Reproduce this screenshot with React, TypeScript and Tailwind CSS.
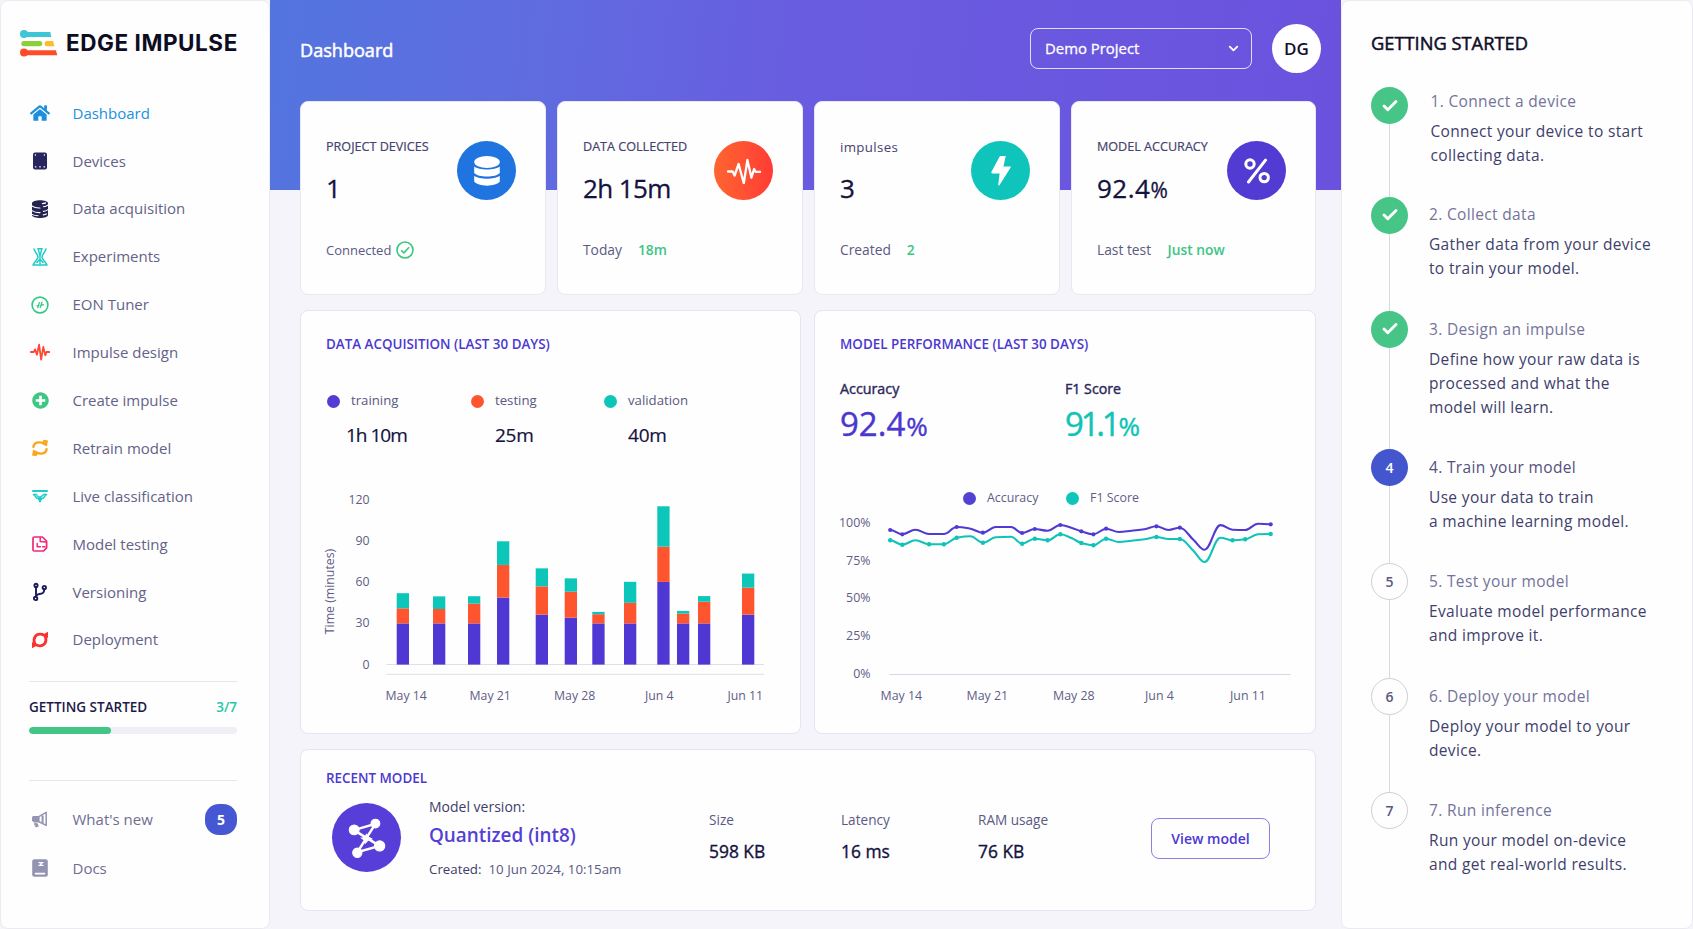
import type { ReactNode } from "react";
import { FaHome, FaPlusCircle } from "react-icons/fa";
import { Check, ChevronDown } from "lucide-react";
import { clsx } from "clsx";

interface INavItem {
  label: string;
  icon: ReactNode;
  active?: boolean;
}

interface IStep {
  title: string;
  lines: string[];
  state: "done" | "current" | "todo";
  rowClass: string;
  textClass: string;
}

const WAVE = "M0.8 10h3l1.3-2.6 1.8 5.4 2.2-10.2 2 15 2.2-12.6 2 8.4 1.2-3.4h2.8";

function Glyph({ children }: { children: ReactNode }) {
  return (
    <svg viewBox="0 0 20 20" className="h-5 w-5" fill="none" strokeLinecap="round" strokeLinejoin="round">
      {children}
    </svg>
  );
}

function Logo() {
  return (
    <div className="flex h-7 items-center gap-[8px]">
      <svg viewBox="0 0 38 28" className="h-7 w-[38px] shrink-0">
        <path d="M4 3h26.3l1 5H4z" fill="#3fc6d6" />
        <circle cx="4" cy="5" r="4" fill="#3fc6d6" />
        <rect x="1.3" y="12" width="21" height="5.2" rx="2.6" fill="#8bd03c" />
        <path d="M27.2 12h5.8l1.4 5.2h-7.2a2.6 2.6 0 0 1 0-5.2z" fill="#fdbb2d" />
        <path d="M4 21.2h31.8l1.6 5H4z" fill="#ff4b28" />
        <circle cx="4" cy="23.6" r="4" fill="#ff4b28" />
      </svg>
      <span className="font-[Inter,sans-serif] text-[22.5px] leading-7 font-bold tracking-[0.55px] whitespace-nowrap text-[#0c0c22]">
        EDGE IMPULSE
      </span>
    </div>
  );
}

const navItems: INavItem[] = [
  { label: "Dashboard", icon: <FaHome className="h-5 w-5 text-[#1e8fdd]" />, active: true },
  {
    label: "Devices",
    icon: (
      <Glyph>
        <rect x="3" y="1.5" width="14" height="17" rx="2" fill="#262560" />
        <path d="M5.3 4h.2M14.3 4h.2M5.3 15.8h.6M9.7 15.8h.6M14 15.8h.6" stroke="#fff" strokeWidth="1.3" />
      </Glyph>
    ),
  },
  {
    label: "Data acquisition",
    icon: (
      <Glyph>
        <path d="M2 4.2C2 .2 18 .2 18 4.2V16c0 4-16 4-16 0z" fill="#25234f" />
        <path
          d="M2 7c2.5 1.8 5 2.2 8 2M2 11.6c2.5 1.8 5 2.2 8 2M2 15.4c2 1.2 4 1.4 6 1.4M18 6c-1.4 1-3 1.6-4.6 1.8M18 10.6c-1.4 1-3 1.6-4.6 1.8"
          stroke="#fff"
          strokeWidth="1.1"
        />
        <path d="M12.5 4.6l3-.6M13.4 15.8c1.2-.2 2-.4 3-.8" stroke="#fff" strokeWidth="1.3" />
      </Glyph>
    ),
  },
  {
    label: "Experiments",
    icon: (
      <Glyph>
        <g stroke="#1fcac6" strokeWidth="1.5">
          <path d="M4 1.9C5 5.8 8 7.6 8 10S4.4 14.6 3 18h14c-1.4-3.4-5-5.6-5-8s3-4.2 4-8.1" />
          <path d="M7.8 1.8h4.4M8.4 2.6L10 9l1.6-6.4M10 8.5V17M6.8 15.6l3.2-3.4 3.2 3.4" strokeWidth="1.4" />
        </g>
      </Glyph>
    ),
  },
  {
    label: "EON Tuner",
    icon: (
      <Glyph>
        <circle cx="10" cy="10" r="7.9" stroke="#35c884" strokeWidth="1.6" />
        <path d="M9.3 7.6l-1.4 5M11.9 7.2l-1.6 5.2M7 10.8l2-.4M11 10.4l2.4-.8" stroke="#35c884" strokeWidth="1.3" />
      </Glyph>
    ),
  },
  {
    label: "Impulse design",
    icon: (
      <Glyph>
        <path d={WAVE} stroke="#fb4a34" strokeWidth="1.8" />
      </Glyph>
    ),
  },
  { label: "Create impulse", icon: <FaPlusCircle className="h-[17px] w-[17px] text-[#40c683]" /> },
  {
    label: "Retrain model",
    icon: (
      <Glyph>
        <g stroke="#fca51e" strokeWidth="2.4">
          <path d="M3.4 8.8C4 5.6 6.4 4.3 9.4 4.4c1.8.1 3.2.4 4.4 1" />
          <path d="M16.6 11.2c-.6 3.2-3 4.5-6 4.4-1.8-.1-3.2-.4-4.4-1" />
        </g>
        <path d="M13.4 1.8l4.6.8-1.2 5.8-4.4-2.2zM6.6 18.2L2 17.4l1.2-5.8 4.4 2.2z" fill="#fca51e" />
      </Glyph>
    ),
  },
  {
    label: "Live classification",
    icon: (
      <Glyph>
        <g stroke="#22cbc9">
          <path d="M3 5h14" strokeWidth="2.2" />
          <path
            d="M3.4 8.4h3.2M13.4 8.4h3.2M3.8 8.6l3 3.6h6.4l3-3.6M7.2 9.8l2 1M12.8 9.4l-2.2 1.4M10 12v3.6"
            strokeWidth="1.5"
          />
        </g>
        <path d="M7.6 13h4.8L10 16.8z" fill="#22cbc9" />
      </Glyph>
    ),
  },
  {
    label: "Model testing",
    icon: (
      <Glyph>
        <g stroke="#f02878" strokeWidth="1.7">
          <path d="M4.2 3h8.2l4.2 4v6.8l-3 3.2H4.2A1.2 1.2 0 0 1 3 15.8V4.2A1.2 1.2 0 0 1 4.2 3z" />
          <path d="M10.2 3.6V7.6l5.8.4M7.2 9.6v3.2h3.2M12.6 12.8h2.4" strokeWidth="1.5" />
        </g>
      </Glyph>
    ),
  },
  {
    label: "Versioning",
    icon: (
      <Glyph>
        <g stroke="#1d1b5a" strokeWidth="1.9">
          <circle cx="6" cy="3.4" r="1.6" />
          <circle cx="14.3" cy="5.6" r="1.7" />
          <circle cx="5.6" cy="16.4" r="1.7" />
          <path d="M6 5v9.6M14.3 7.3c0 4-2.3 4.3-5 4.7-2 .3-2.8 1-3.3 2.4" />
        </g>
      </Glyph>
    ),
  },
  {
    label: "Deployment",
    icon: (
      <Glyph>
        <g stroke="#fa3230" strokeWidth="2.8">
          <path d="M4.6 13C2.8 8.6 5.4 4.2 10 4.2c1.6 0 3 .4 4.2 1.2" />
          <path d="M15.4 7c1.8 4.4-.8 8.8-5.4 8.8-1.6 0-3-.4-4.2-1.2" />
        </g>
        <path d="M12.4 4.8L18 1.8V8zM7.6 15.2L2 18.2V12z" fill="#fa3230" />
      </Glyph>
    ),
  },
];

function Sidebar() {
  return (
    <aside className="flex w-[270px] shrink-0 flex-col rounded-lg border border-[#ebeaf1] bg-[#fefefe] pr-[32px] pl-[28px]">
      <div className="mt-[28px] -ml-[9px]">
        <Logo />
      </div>
      <nav className="mt-[32px] flex flex-col">
        {navItems.map((item) => (
          <a key={item.label} className="flex h-[47.9px] items-center">
            <span className="flex w-[22px] justify-center">{item.icon}</span>
            <span
              className={clsx(
                "ml-[21.5px] text-[15px] whitespace-nowrap",
                item.active ? "text-[#2092df]" : "text-[#646288]",
              )}
            >
              {item.label}
            </span>
          </a>
        ))}
      </nav>
      <section className="mt-[17.4px] h-[100px] border-y border-[#e6e5ec] pt-[14px]">
        <div className="flex justify-between text-[13.5px] leading-[22px] font-semibold">
          <h2 className="text-[#1c1a48]">GETTING STARTED</h2>
          <span className="text-[#1fc8a8]">3/7</span>
        </div>
        <div className="mt-[8.5px] h-[7px] overflow-hidden rounded-full bg-[#f0eff5]">
          <div className="h-full w-[82px] rounded-full bg-[#43c585]" />
        </div>
      </section>
      <a className="mt-[14px] flex h-12 items-center">
        <span className="flex w-[22px] justify-center">
          <Glyph>
            <path d="M2.8 7h6.8v6.4H3.8L2 11.6V8.8z" fill="#9493b1" />
            <path d="M9.6 7.2l6.6-3.8v13L9.6 13" stroke="#9493b1" strokeWidth="1.5" />
            <path d="M12.6 7.2v6" stroke="#9493b1" strokeWidth="2" />
            <path d="M4.8 14.6l2.6.2.8 2.4-2 .6z" fill="#9493b1" stroke="#9493b1" />
          </Glyph>
        </span>
        <span className="ml-[21.5px] text-[15px] text-[#6f6d92]">What's new</span>
        <span className="ml-auto flex h-[31px] w-[32px] items-center justify-center rounded-[14px] bg-[#4657d3] text-[14px] font-bold text-white">
          5
        </span>
      </a>
      <a className="mt-[1px] flex h-12 items-center">
        <span className="flex w-[22px] justify-center">
          <Glyph>
            <rect x="2.2" y="1.2" width="15.6" height="17.6" rx="2" fill="#9493b1" />
            <path d="M9 4.6h4M9 7.4h4M11.8 4.8l-1.6 2.4" stroke="#fff" strokeWidth="1.3" />
            <path d="M5.6 15.6h8.8" stroke="#fff" strokeWidth="1.8" />
          </Glyph>
        </span>
        <span className="ml-[21.5px] text-[15px] text-[#6f6d92]">Docs</span>
      </a>
    </aside>
  );
}

function StatCard({
  label,
  labelClass = "text-[12.6px] [-webkit-text-stroke:0.2px]",
  value,
  valueClass,
  unit,
  note,
  noteClass,
  extra,
  icon,
  iconClass,
}: {
  label: string;
  labelClass?: string;
  value: string;
  valueClass?: string;
  unit?: string;
  note: string;
  noteClass?: string;
  extra: ReactNode;
  icon: ReactNode;
  iconClass: string;
}) {
  return (
    <article className="flex h-[194px] justify-between rounded-lg border border-[#e9e8f1] bg-[#fefefe] pr-[29px] pl-[25px]">
      <div className="flex flex-col">
        <h3 className={clsx("mt-[34.5px] h-[19.5px] leading-[20px] whitespace-nowrap text-[#45436f]", labelClass)}>
          {label}
        </h3>
        <p
          className={clsx(
            "mt-[14px] h-[36px] text-[26px] leading-[36px] whitespace-nowrap text-[#14123f] [-webkit-text-stroke:0.3px]",
            valueClass,
          )}
        >
          {value}
          {unit && <span className="text-[21px]">{unit}</span>}
        </p>
        <p className="mt-[34px] flex h-[20px] items-center text-[13.8px] leading-[20px] whitespace-nowrap text-[#5b5983]">
          <span className={noteClass}>{note}</span>
          {extra}
        </p>
      </div>
      <div className={clsx("mt-[39px] flex h-[59px] w-[59px] shrink-0 items-center justify-center rounded-full", iconClass)}>
        {icon}
      </div>
    </article>
  );
}

function StatCards() {
  return (
    <section className="grid grid-cols-[246px_246px_246px_245px] gap-[11px]">
      <StatCard
        label="PROJECT DEVICES"
        value="1"
        note="Connected"
        noteClass="text-[13px]"
        extra={
          <svg viewBox="0 0 18 18" className="ml-[5px] h-[18px] w-[18px]" fill="none" stroke="#3cc583" strokeWidth="1.6">
            <circle cx="9" cy="9" r="8" />
            <path d="M5.2 9.3l2.7 2.6 5.2-5.6" />
          </svg>
        }
        iconClass="bg-[#1f74e0]"
        icon={
          <svg viewBox="0 0 26 30" className="h-[30px] w-[26px]" fill="#fff">
            <ellipse cx="13" cy="6" rx="12.8" ry="6" />
            <path d="M.2 10.6c5 4 20.6 4 25.6 0v6.4c-4 4.8-21.6 4.8-25.6 0z" />
            <path d="M.2 19.8c5 4 20.6 4 25.6 0v5.8c-4 5.4-21.6 5.4-25.6 0z" />
          </svg>
        }
      />
      <StatCard
        label="DATA COLLECTED"
        value="2h 15m"
        valueClass="tracking-[-0.6px]"
        note="Today"
        extra={<b className="ml-[16px] font-semibold text-[#3cc583]">18m</b>}
        iconClass="bg-linear-to-r from-[#ff6430] to-[#ff3a35]"
        icon={
          <svg
            viewBox="0 0 34 26"
            className="h-[26px] w-[34px]"
            fill="none"
            stroke="#fff"
            strokeWidth="2.3"
            strokeLinecap="round"
            strokeLinejoin="round"
          >
            <path d="M1 13.5h4.6l2 4 4-11.5 5.2 19.2L20.4 2l4 17.6 2.7-8.6 1.5 2.8H33" />
          </svg>
        }
      />
      <StatCard
        label="impulses"
        labelClass="text-[13.3px] tracking-[0.35px]"
        value="3"
        note="Created"
        extra={<b className="ml-[16px] font-semibold text-[#3cc583]">2</b>}
        iconClass="bg-[#0fc5bb]"
        icon={
          <svg viewBox="0 0 20 30" className="h-[30px] w-[20px]" fill="#fff">
            <path d="M9.6 0h5.2l-2.4 10.4H19q1.2.2.5 1.4L8.4 29.3q-1.2.9-1.1-.7L8.6 17.5H1.2Q-.2 17.2.5 15.8L8.5.8Q8.9 0 9.6 0z" />
          </svg>
        }
      />
      <StatCard
        label="MODEL ACCURACY"
        value="92.4"
        valueClass="tracking-[0.5px]"
        unit="%"
        note="Last test"
        extra={<b className="ml-[16.5px] font-semibold text-[#3cc583]">Just now</b>}
        iconClass="bg-[#513bd3]"
        icon={
          <svg viewBox="0 0 26 26" className="h-[26px] w-[26px]" fill="none" stroke="#fff" strokeWidth="3" strokeLinecap="round">
            <circle cx="6" cy="6" r="4.2" />
            <circle cx="20.2" cy="19.6" r="4.2" />
            <path d="M21.5 2.2L4.5 24" />
          </svg>
        }
      />
    </section>
  );
}

function Panel({ title, children }: { title: string; children: ReactNode }) {
  return (
    <section className="flex h-[424px] flex-col rounded-lg border border-[#e6e5ef] bg-[#fefefe] pt-[22px] pl-[25px]">
      <h2 className="text-[13.4px] leading-[22px] font-semibold whitespace-nowrap text-[#4b39cf]">{title}</h2>
      {children}
    </section>
  );
}

// minutes per sample: x offset, training, testing, validation
const bars = [
  [70.7, 30, 11, 11],
  [107, 30, 10.5, 9.2],
  [142, 30, 14.4, 5.4],
  [171, 48.8, 23.8, 17.2],
  [209.7, 36.4, 20.6, 13.1],
  [238.7, 34.2, 18.9, 9.7],
  [266.3, 30, 6.7, 1.7],
  [298, 30, 15, 15.3],
  [331.3, 60.2, 25.7, 29.4],
  [351, 30, 7.1, 2],
  [372, 30, 15.8, 4.1],
  [416, 36.4, 19.7, 10.2],
];

function BarChart() {
  const base = 179.6;
  const perMinute = 1.373;
  return (
    <svg viewBox="-12 0 462 220" className="mt-[35px] -ml-[12px] h-[220px] w-[462px] text-[12.3px]" fill="#5f5d86">
      <path d="M60.5 179.5H438M60.5 189.3H438" stroke="#e0dfe9" />
      {["120", "90", "60", "30", "0"].map((tick, i) => (
        <text key={tick} x="43.5" y={18.5 + i * 41.3} textAnchor="end">
          {tick}
        </text>
      ))}
      <text transform="translate(7.5 106.5) rotate(-90)" textAnchor="middle">
        Time (minutes)
      </text>
      {bars.map(([x, training, testing, validation]) => {
        const a = base - training * perMinute;
        const b = a - testing * perMinute;
        const c = b - validation * perMinute;
        return (
          <g key={x}>
            <rect x={x} y={a} width="12.3" height={base - a} fill="#4f37d3" />
            <rect x={x} y={b} width="12.3" height={a - b} fill="#ff552f" />
            <rect x={x} y={c} width="12.3" height={b - c} fill="#0cc6b9" />
          </g>
        );
      })}
      <text x="59.5" y="215">May 14</text>
      <text x="143.5" y="215">May 21</text>
      <text x="228" y="215">May 28</text>
      <text x="319" y="215">Jun 4</text>
      <text x="401.5" y="215">Jun 11</text>
    </svg>
  );
}

const xs = [
  50.2, 62.3, 75.4, 89.1, 103.9, 116.7, 130.5, 142.9, 155.6, 171.1, 182.1, 194.8, 207.6, 220.3, 232, 241.3, 253.4,
  266.1, 278.9, 291.6, 304.4, 316.4, 328.5, 339.8, 353.6, 364.6, 380.4, 392.5, 405.2, 418, 430.7,
];
const accuracy = [
  20, 24.3, 19.7, 24, 24, 17, 18.7, 22.7, 17, 17, 23, 19, 20.7, 15, 18, 21.3, 24.3, 18.7, 22, 20.7, 19.3, 16.3, 20,
  17.7, 30, 39.7, 15.1, 19.7, 20, 13.7, 14.3,
];
const f1 = [
  30.3, 34.7, 30.3, 34.3, 34.3, 27.7, 26.3, 32.7, 27.3, 26.7, 33.7, 28.7, 30.3, 24.3, 28.3, 33, 35.3, 28.7, 32, 30.7,
  29.3, 27, 29, 29, 41, 52, 27.7, 30.3, 29.3, 24.3, 24,
];
const accuracyDots = [0, 1, 5, 7, 10, 11, 13, 15, 16, 17, 21, 23, 30];
const f1Dots = [0, 1, 3, 4, 5, 7, 10, 11, 12, 13, 15, 16, 17, 21, 23, 27, 28, 30];

// cubic path that keeps flat tangents at local peaks and dips
function smoothPath(ys: number[]) {
  const slopes = ys.map((y, i) => {
    if (i === 0 || i === ys.length - 1) return 0;
    const before = (y - ys[i - 1]) / (xs[i] - xs[i - 1]);
    const after = (ys[i + 1] - y) / (xs[i + 1] - xs[i]);
    return before * after <= 0 ? 0 : (2 * before * after) / (before + after);
  });
  return ys.reduce((path, y, i) => {
    if (i === 0) return `M${xs[0]} ${y}`;
    const reach = (xs[i] - xs[i - 1]) * 0.38;
    return `${path}C${xs[i - 1] + reach} ${ys[i - 1] + slopes[i - 1] * reach} ${xs[i] - reach} ${y - slopes[i] * reach} ${xs[i]} ${y}`;
  }, "");
}

function LineChart() {
  return (
    <svg viewBox="0 0 460 195" className="mt-[1px] h-[195px] w-[460px] text-[12.4px]" fill="#5f5d86">
      <path d="M49.5 164.5H450.5" stroke="#d8d7e5" />
      {["100%", "75%", "50%", "25%", "0%"].map((tick, i) => (
        <text key={tick} x="30.5" y={16.8 + i * 37.75} textAnchor="end">
          {tick}
        </text>
      ))}
      <g fill="none" strokeWidth="2.1" strokeLinecap="round">
        <path d={smoothPath(accuracy)} stroke="#4f3bd2" />
        <path d={smoothPath(f1)} stroke="#0fc3b6" />
      </g>
      {accuracyDots.map((i) => (
        <circle key={i} cx={xs[i]} cy={accuracy[i]} r="2.1" fill="#4f3bd2" />
      ))}
      {f1Dots.map((i) => (
        <circle key={i} cx={xs[i]} cy={f1[i]} r="2.2" fill="#0fc3b6" />
      ))}
      <text x="40.5" y="190">May 14</text>
      <text x="126.5" y="190">May 21</text>
      <text x="213" y="190">May 28</text>
      <text x="305" y="190">Jun 4</text>
      <text x="390" y="190">Jun 11</text>
    </svg>
  );
}

function DataAcquisition() {
  const totals = [
    { name: "training", value: "1h 10m", dot: "bg-[#523cd3]", valueClass: "ml-[19px] tracking-[-1px]" },
    { name: "testing", value: "25m", dot: "bg-[#ff552f]", valueClass: "ml-[24px] tracking-[-0.3px]" },
    { name: "validation", value: "40m", dot: "bg-[#0cc6b9]", valueClass: "ml-[24px] tracking-[-0.2px]" },
  ];
  return (
    <Panel title="DATA ACQUISITION (LAST 30 DAYS)">
      <div className="mt-[35px] ml-[1px] grid grid-cols-[144px_133px_133px]">
        {totals.map((total) => (
          <div key={total.name}>
            <div className="flex h-[22px] items-center text-[13.2px] text-[#5a5882]">
              <span className={clsx("mr-[11px] h-[13px] w-[13px] rounded-full", total.dot)} />
              {total.name}
            </div>
            <p
              className={clsx(
                "mt-[8px] text-[19px] leading-[30px] whitespace-nowrap text-[#14123f] [-webkit-text-stroke:0.2px]",
                total.valueClass,
              )}
            >
              {total.value}
            </p>
          </div>
        ))}
      </div>
      <BarChart />
    </Panel>
  );
}

function ModelPerformance() {
  return (
    <Panel title="MODEL PERFORMANCE (LAST 30 DAYS)">
      <div className="mt-[23px] grid grid-cols-[225px_225px]">
        <div>
          <h3 className="text-[14.3px] leading-[22px] text-[#2a285a] [-webkit-text-stroke:0.4px]">Accuracy</h3>
          <p className="mt-[3px] text-[33px] leading-[42px] text-[#4b37cf] [-webkit-text-stroke:0.4px]">
            92.4<span className="ml-px text-[26px]">%</span>
          </p>
        </div>
        <div>
          <h3 className="text-[14.2px] leading-[22px] text-[#2a285a] [-webkit-text-stroke:0.4px]">F1 Score</h3>
          <p className="mt-[3px] text-[33px] leading-[42px] tracking-[-3.2px] text-[#0fc3b6] [-webkit-text-stroke:0.4px]">
            91.1<span className="ml-[1px] text-[26px]">%</span>
          </p>
        </div>
      </div>
      <div className="mt-[40px] ml-[123px] flex h-[22px] items-center text-[12.4px] text-[#5f5d86]">
        <span className="mr-[11px] h-[13px] w-[13px] rounded-full bg-[#5142d4]" />
        <span className="w-[79px]">Accuracy</span>
        <span className="mr-[11px] h-[13px] w-[13px] rounded-full bg-[#0cc6b9]" />
        F1 Score
      </div>
      <LineChart />
    </Panel>
  );
}

function RecentModel() {
  const specs = [
    { name: "Size", value: "598 KB", width: "w-[132px]" },
    { name: "Latency", value: "16 ms", width: "w-[137px]" },
    { name: "RAM usage", value: "76 KB", width: "w-[173px]" },
  ];
  return (
    <section className="h-[162px] rounded-lg border border-[#e6e5ef] bg-[#fefefe] pt-[17px] pl-[25px]">
      <h2 className="text-[13.4px] leading-[22px] font-semibold text-[#4b39cf]">RECENT MODEL</h2>
      <div className="flex">
        <div className="mt-[14px] ml-[6px] flex h-[69px] w-[69px] items-center justify-center rounded-full bg-[#573ed8]">
          <svg viewBox="0 0 36 38" className="h-[40px] w-[38px]" fill="#fff" stroke="#fff">
            <path d="M5.5 11.5L26 5.5 8.5 33M5.5 11.5L30 26.5M8.5 32.5L30 26.5" fill="none" strokeWidth="2.3" />
            <path d="M17.5 15.5l2 2.8 3 1.5-3.2 1-3 3.2-.8-3-2.7-2 3.2-.4z" />
            <circle cx="5.8" cy="11.3" r="4.7" />
            <circle cx="26" cy="5.3" r="4.2" />
            <circle cx="30" cy="26.5" r="4.9" />
            <circle cx="8.8" cy="33" r="4.4" />
          </svg>
        </div>
        <div className="mt-[7px] ml-[28px] w-[280px] whitespace-nowrap">
          <p className="text-[14px] leading-[22px] text-[#3f3d6b]">Model version:</p>
          <p className="mt-[2px] text-[18.9px] leading-[30px] font-semibold text-[#543fd6]">Quantized (int8)</p>
          <p className="mt-[8px] text-[13.3px] leading-[22px] text-[#5b5983]">
            <span className="mr-[7px] text-[#3f3d6b]">Created:</span>
            10 Jun 2024, 10:15am
          </p>
        </div>
        {specs.map((spec) => (
          <div key={spec.name} className={clsx("mt-[20px] whitespace-nowrap", spec.width)}>
            <p className="text-[13.6px] leading-[22px] text-[#5b5983]">{spec.name}</p>
            <p className="mt-[7px] text-[17.4px] leading-[26px] text-[#14123f] [-webkit-text-stroke:0.35px]">{spec.value}</p>
          </div>
        ))}
        <button className="mt-[29px] h-[41px] w-[119px] rounded-lg border border-[#8d80e4] text-[14px] font-semibold text-[#4b37d3]">
          View model
        </button>
      </div>
    </section>
  );
}

const steps: IStep[] = [
  {
    title: "1. Connect a device",
    lines: ["Connect your device to start", "collecting data."],
    state: "done",
    rowClass: "h-[109.7px]",
    textClass: "pt-[2px] pl-[22.5px]",
  },
  {
    title: "2. Collect data",
    lines: ["Gather data from your device", "to train your model."],
    state: "done",
    rowClass: "h-[114.3px]",
    textClass: "pt-[5px] pl-[21px]",
  },
  {
    title: "3. Design an impulse",
    lines: ["Define how your raw data is", "processed and what the", "model will learn."],
    state: "done",
    rowClass: "h-[138px]",
    textClass: "pt-[6px] pl-[21px]",
  },
  {
    title: "4. Train your model",
    lines: ["Use your data to train", "a machine learning model."],
    state: "current",
    rowClass: "h-[114.3px]",
    textClass: "pt-[6px] pl-[21px]",
  },
  {
    title: "5. Test your model",
    lines: ["Evaluate model performance", "and improve it."],
    state: "todo",
    rowClass: "h-[114.3px]",
    textClass: "pt-[6px] pl-[21px]",
  },
  {
    title: "6. Deploy your model",
    lines: ["Deploy your model to your", "device."],
    state: "todo",
    rowClass: "h-[114.3px]",
    textClass: "pt-[6px] pl-[21px]",
  },
  {
    title: "7. Run inference",
    lines: ["Run your model on-device", "and get real-world results."],
    state: "todo",
    rowClass: "h-[90px]",
    textClass: "pt-[6px] pl-[21px]",
  },
];

function GettingStarted() {
  return (
    <aside className="w-[352px] shrink-0 rounded-lg border border-[#ebeaf1] bg-[#fefefe] pt-[29px] pl-[29px]">
      <h2 className="text-[18.3px] leading-[26px] text-[#0f0e28] [-webkit-text-stroke:0.5px]">GETTING STARTED</h2>
      <ol className="mt-[31px]">
        {steps.map((step, i) => (
          <li key={step.title} className={clsx("flex", step.rowClass)}>
            <div className="flex w-[37px] flex-col items-center">
              <span
                className={clsx(
                  "flex h-[37px] w-[37px] shrink-0 items-center justify-center rounded-full text-[14px] font-semibold",
                  step.state === "done" && "bg-[#46c587] text-white",
                  step.state === "current" && "bg-[#4356ce] text-white",
                  step.state === "todo" && "border border-[#cfcfd4] text-[#5b5983]",
                )}
              >
                {step.state === "done" ? <Check className="h-[18px] w-[18px]" strokeWidth={3.8} /> : i + 1}
              </span>
              {i < steps.length - 1 && <span className="w-px flex-1 bg-[#d6dad8]" />}
            </div>
            <div className={clsx("tracking-[0.34px] whitespace-nowrap", step.textClass)}>
              <h3
                className={clsx(
                  "text-[15.5px] leading-[24px]",
                  step.state === "current" ? "text-[#53517d]" : "text-[#74739a]",
                )}
              >
                {step.title}
              </h3>
              <p className="mt-[6px] text-[15.5px] leading-[24px] text-[#403e6c]">
                {step.lines.map((line) => (
                  <span key={line} className="block">
                    {line}
                  </span>
                ))}
              </p>
            </div>
          </li>
        ))}
      </ol>
    </aside>
  );
}

export default function App() {
  return (
    <div className="flex h-[929px] w-[1693px] overflow-hidden bg-[#f5f4fa] font-['Open_Sans','Noto_Sans',sans-serif]">
      <Sidebar />
      <main className="flex w-[1071px] shrink-0 flex-col bg-[linear-gradient(97deg,#5375df_0%,#606be0_26%,#695ce0_50%,#6b52de_100%)] bg-[length:100%_190px] bg-no-repeat pr-[25px] pl-[30px]">
        <header className="flex h-[101px] items-center">
          <h1 className="text-[18.1px] text-white [-webkit-text-stroke:0.5px]">Dashboard</h1>
          <button className="-mt-[4px] mr-[20px] ml-auto flex h-[41px] w-[222px] items-center justify-between rounded-lg border border-white/80 pr-[10px] pl-[14px] text-[14.9px] text-white [-webkit-text-stroke:0.3px]">
            Demo Project
            <ChevronDown className="h-[15px] w-[15px]" strokeWidth={3} />
          </button>
          <span className="-mt-[4px] -mr-[5px] flex h-[49px] w-[49px] items-center justify-center rounded-full bg-white text-[17px] font-semibold text-[#12102e]">
            DG
          </span>
        </header>
        <StatCards />
        <div className="mt-[15px] mb-[15px] grid grid-cols-[501px_502px] gap-[13px]">
          <DataAcquisition />
          <ModelPerformance />
        </div>
        <RecentModel />
      </main>
      <GettingStarted />
    </div>
  );
}
